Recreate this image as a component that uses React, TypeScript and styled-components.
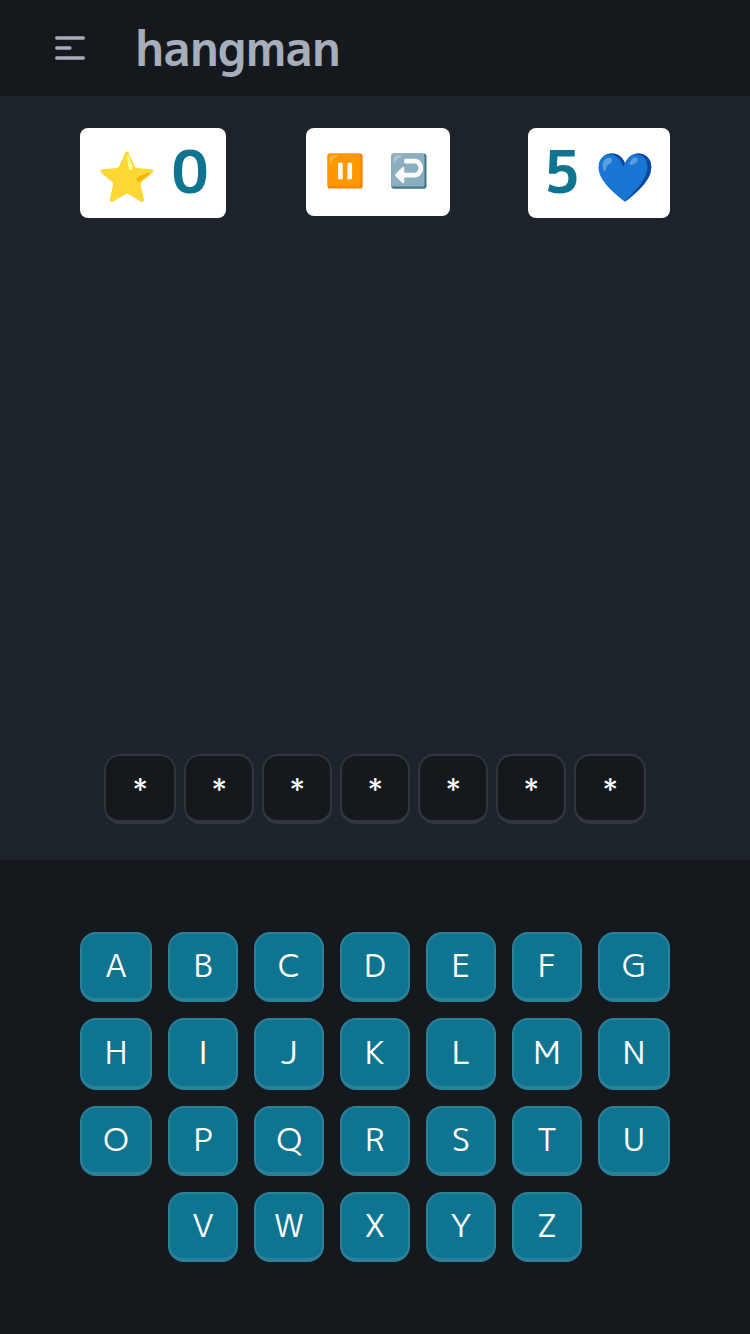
import React from "react";
import styled, { createGlobalStyle } from "styled-components";

const GlobalStyle = createGlobalStyle`
  * { box-sizing: border-box; }
  body {
    margin: 0;
    background: #1d232a;
    color: #a6adbb;
    font-family: "M PLUS 1p", "Noto Sans", sans-serif;
  }
`;

const Page = styled.div`
  height: 1334px;
  display: flex;
  flex-direction: column;
  overflow: hidden;
`;

const Header = styled.header`
  height: 96px;
  flex: none;
  display: flex;
  align-items: center;
  gap: 45px;
  padding-left: 50px;
  background: #15191e;
`;

const MenuIcon = styled.svg`
  width: 40px;
  height: 40px;
`;

const Title = styled.h1`
  margin: 0;
  font-size: 48px;
  line-height: 64px;
  font-weight: 700;
  letter-spacing: -0.9px;
`;

const Board = styled.main`
  height: 764px;
  flex: none;
  display: flex;
  flex-direction: column;
  justify-content: space-between;
  padding: 32px 80px 36px;
`;

const StatusBar = styled.div`
  display: grid;
  grid-template-columns: 146px 144px 142px;
  align-items: start;
  gap: 79px;
`;

const Card = styled.div<{ $height: number }>`
  height: ${(p) => p.$height}px;
  display: flex;
  align-items: center;
  justify-content: center;
  background: #fff;
  border-radius: 8px;
  white-space: nowrap;
`;

const ScoreCard = styled(Card)`
  gap: 14px;
`;

const ActionCard = styled(Card)`
  margin: 0 -1px 0 1px;
  padding-right: 2px;
`;

const Score = styled.span`
  font-size: 58px;
  line-height: 90px;
  font-weight: 700;
  color: #0e7490;
  padding-bottom: 3px;
`;

const Emoji = styled.span`
  font-size: 48px;
  line-height: 90px;
  padding-top: 6px;
`;

const ActionButton = styled.button`
  width: 64px;
  height: 88px;
  padding: 0 0 4px;
  border: 0;
  background: none;
  font: 32px/84px "M PLUS 1p", "Noto Sans", sans-serif;
`;

const Word = styled.div`
  display: grid;
  grid-template-columns: 72px repeat(5, 70px) 72px;
  gap: 8px;
  justify-content: center;
`;

const Tile = styled.div`
  height: 70px;
  display: flex;
  align-items: center;
  justify-content: center;
  padding: 8px 1px 0 0;
  border: 2px solid #31353c;
  border-bottom-width: 4px;
  border-radius: 16px;
  background: #15191e;
  color: #fff;
  font-family: "Istok Web", "Noto Sans", sans-serif;
  font-size: 32px;
  line-height: 48px;
`;

const Keyboard = styled.section`
  flex: 1;
  display: grid;
  grid-template-columns: 72px repeat(5, 70px) 72px;
  grid-template-rows: 70px 72px 70px 70px;
  gap: 16px;
  justify-content: center;
  padding-top: 72px;
  background: #15191e;
`;

const Key = styled.button<{ $column?: number }>`
  grid-column-start: ${(p) => p.$column ?? "auto"};
  padding: 0 0 3px;
  border: 2px solid #2d8099;
  border-bottom-width: 4px;
  border-radius: 16px;
  background: #0e7490;
  color: #fff;
  font-family: inherit;
  font-size: 32px;
  line-height: 48px;
`;

const letters = "ABCDEFGHIJKLMNOPQRSTUVWXYZ".split("");

export default function App() {
  return (
    <>
      <GlobalStyle />
      <Page>
        <Header>
          <MenuIcon viewBox="0 0 24 24" fill="none" stroke="currentColor" strokeWidth="2" strokeLinecap="round">
            <path d="M4 6h16M4 12h8M4 18h16" />
          </MenuIcon>
          <Title>hangman</Title>
        </Header>
        <Board>
          <StatusBar>
            <ScoreCard $height={90}>
              <Emoji>⭐</Emoji>
              <Score>0</Score>
            </ScoreCard>
            <ActionCard $height={88}>
              <ActionButton>⏸️</ActionButton>
              <ActionButton>↩️</ActionButton>
            </ActionCard>
            <ScoreCard $height={90}>
              <Score>5</Score>
              <Emoji>💙</Emoji>
            </ScoreCard>
          </StatusBar>
          <Word>
            {Array.from({ length: 7 }, (_, i) => (
              <Tile key={i}>*</Tile>
            ))}
          </Word>
        </Board>
        <Keyboard>
          {letters.map((letter) => (
            <Key key={letter} $column={letter === "V" ? 2 : undefined}>
              {letter}
            </Key>
          ))}
        </Keyboard>
      </Page>
    </>
  );
}
